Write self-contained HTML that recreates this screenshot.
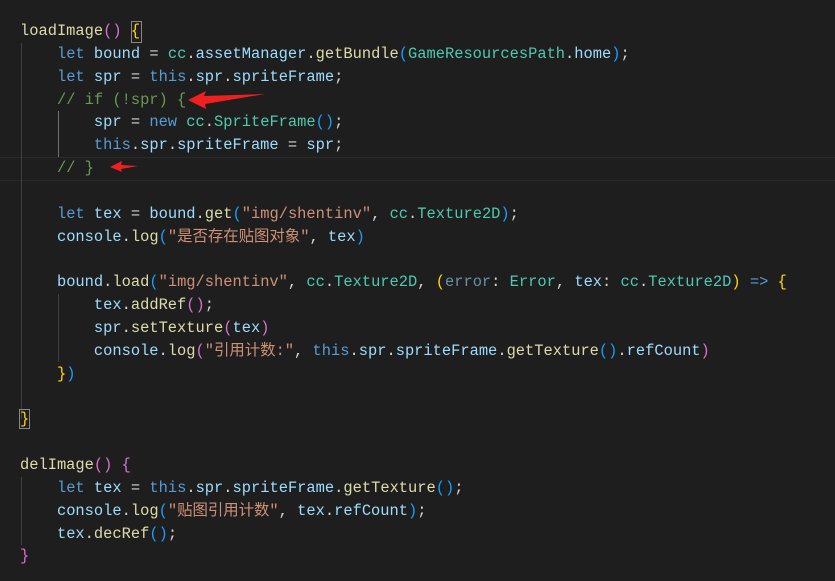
<!DOCTYPE html><html><head><meta charset="utf-8"><style>
body{margin:0;background:#1e1e1e;width:835px;height:581px;overflow:hidden;position:relative}
pre{margin:0;position:absolute;left:20px;top:20px;font-family:"Liberation Mono","Noto Sans CJK SC",monospace;font-size:15.4px;line-height:22.85px;color:#d4d4d4}
.k{color:#569cd6}.v{color:#9cdcfe}.t{color:#4ec9b0}.f{color:#dcdcaa}.s{color:#ce9178}.c{color:#6a9955}
.y{color:#ffd700}.p{color:#da70d6}.b{color:#179fff}.g{color:#9cdcfe;opacity:.6}
.guide{position:absolute;width:1px;background:#404040}
</style></head><body>
<div style="position:absolute;left:0;top:157px;width:835px;height:22px;border-top:1px solid #2a2a2a;border-bottom:1px solid #2a2a2a"></div>
<div class="guide" style="left:21px;top:43px;height:376px"></div>
<div class="guide" style="left:58px;top:111px;height:46px;background:#707070"></div>
<div class="guide" style="left:58px;top:294px;height:68px"></div>
<div class="guide" style="left:21px;top:477px;height:68px"></div>
<div style="position:absolute;left:131px;top:21px;width:9px;height:20px;border:1px solid #888"></div>
<pre><span class="f">loadImage</span><span class="p">()</span> <span class="y">{</span>
    <span class="k">let</span> <span class="v">bound</span> = <span class="t">cc</span>.<span class="v">assetManager</span>.<span class="f">getBundle</span><span class="b">(</span><span class="t">GameResourcesPath</span>.<span class="v">home</span><span class="b">)</span>;
    <span class="k">let</span> <span class="v">spr</span> = <span class="k">this</span>.<span class="v">spr</span>.<span class="v">spriteFrame</span>;
    <span class="c">// if (!spr) {</span>
        <span class="v">spr</span> = <span class="k">new</span> <span class="t">cc</span>.<span class="t">SpriteFrame</span><span class="b">()</span>;
        <span class="k">this</span>.<span class="v">spr</span>.<span class="v">spriteFrame</span> = <span class="v">spr</span>;
    <span class="c">// }</span>

    <span class="k">let</span> <span class="v">tex</span> = <span class="v">bound</span>.<span class="f">get</span><span class="b">(</span><span class="s">"img/shentinv"</span>, <span class="t">cc</span>.<span class="t">Texture2D</span><span class="b">)</span>;
    <span class="v">console</span>.<span class="f">log</span><span class="b">(</span><span class="s">"是否存在贴图对象"</span>, <span class="v">tex</span><span class="b">)</span>

    <span class="v">bound</span>.<span class="f">load</span><span class="b">(</span><span class="s">"img/shentinv"</span>, <span class="t">cc</span>.<span class="t">Texture2D</span>, <span class="y">(</span><span class="g">error</span>: <span class="t">Error</span>, <span class="v">tex</span>: <span class="t">cc</span>.<span class="t">Texture2D</span><span class="y">)</span> <span class="k">=&gt;</span> <span class="y">{</span>
        <span class="v">tex</span>.<span class="f">addRef</span><span class="p">()</span>;
        <span class="v">spr</span>.<span class="f">setTexture</span><span class="p">(</span><span class="v">tex</span><span class="p">)</span>
        <span class="v">console</span>.<span class="f">log</span><span class="p">(</span><span class="s">"引用计数:"</span>, <span class="k">this</span>.<span class="v">spr</span>.<span class="v">spriteFrame</span>.<span class="f">getTexture</span><span class="b">()</span>.<span class="v">refCount</span><span class="p">)</span>
    <span class="y">}</span><span class="b">)</span>

<span class="y" style="outline:1px solid #888">}</span>

<span class="f">delImage</span><span class="p">()</span> <span class="p">{</span>
    <span class="k">let</span> <span class="v">tex</span> = <span class="k">this</span>.<span class="v">spr</span>.<span class="v">spriteFrame</span>.<span class="f">getTexture</span><span class="b">()</span>;
    <span class="v">console</span>.<span class="f">log</span><span class="b">(</span><span class="s">"贴图引用计数"</span>, <span class="v">tex</span>.<span class="v">refCount</span><span class="b">)</span>;
    <span class="v">tex</span>.<span class="f">decRef</span><span class="b">()</span>;
<span class="p">}</span></pre>
<svg width="835" height="581" style="position:absolute;left:0;top:0">
<polygon points="188,100 206,91 204,96 265,94 205,104 206,109" fill="#f02020"/>
<polygon points="110,167 122,161 121,165 138,166 121,169 122,172" fill="#f02020"/>
</svg>
</body></html>
